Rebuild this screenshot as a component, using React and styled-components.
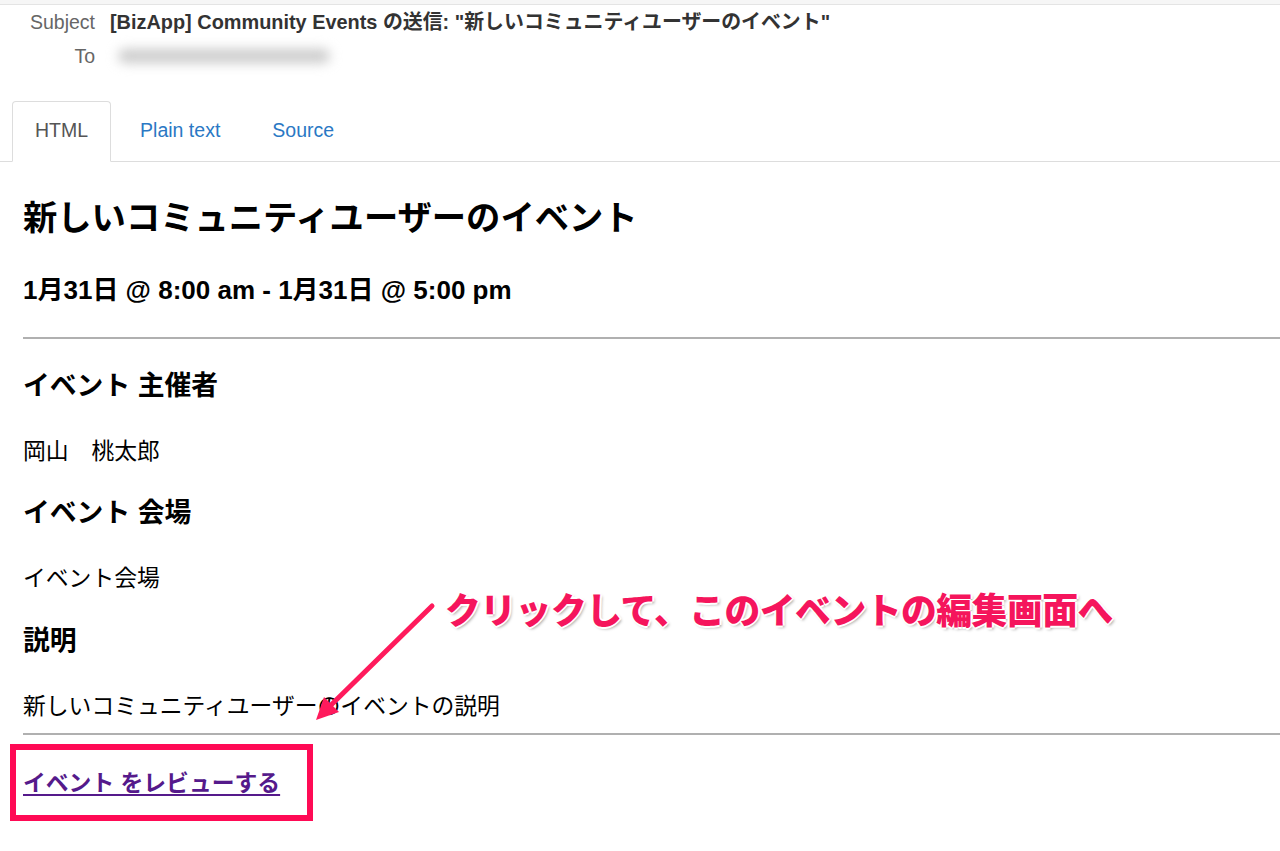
import React from "react";
import styled, { createGlobalStyle } from "styled-components";

const GlobalStyle = createGlobalStyle`
  html, body {
    margin: 0;
    padding: 0;
    background: #fff;
    font-family: "Liberation Sans", "Noto Sans CJK JP", sans-serif;
    color: #000;
  }
`;

const Page = styled.div`
  position: relative;
  width: 1280px;
  height: 851px;
  overflow: hidden;
`;

const TopStrip = styled.div`
  height: 4px;
  background: #f6f6f6;
  border-bottom: 1px solid #e4e4e4;
`;

const Meta = styled.div`
  display: grid;
  grid-template-columns: 95px 1fr;
  column-gap: 15px;
  row-gap: 12px;
  padding-top: 6px;
  font-size: 19.5px;
  line-height: 22px;
`;

const MetaLabel = styled.div`
  text-align: right;
  color: #666;
`;

const MetaValue = styled.div`
  color: #333;
  font-weight: ${(p) => (p.$bold ? 700 : 400)};
  font-size: ${(p) => (p.$bold ? "19.9px" : "inherit")};
`;

const Blurred = styled.div`
  margin: 4px 0 0 8px;
  width: 212px;
  height: 14px;
  background: #cbcbcb;
  border-radius: 7px;
  filter: blur(6px);
`;

const Tabs = styled.div`
  display: flex;
  margin-top: 34px;
  padding-left: 12px;
  border-bottom: 1px solid #dddddd;
`;

const Tab = styled.div`
  padding: 17px 22px 18px;
  margin-right: 6px;
  margin-bottom: ${(p) => (p.$active ? "-1px" : "0")};
  font-size: 19.5px;
  line-height: 23px;
  color: ${(p) => (p.$active ? "#555" : "#2a78c4")};
  background: ${(p) => (p.$active ? "#fff" : "transparent")};
  border: 1px solid ${(p) => (p.$active ? "#dddddd" : "transparent")};
  border-bottom-color: ${(p) => (p.$active ? "#fff" : "transparent")};
  border-radius: 4px 4px 0 0;
`;

const Body = styled.div`
  display: flex;
  flex-direction: column;
  padding-left: 23px;
`;

const Title = styled.h1`
  margin: 36px 0 0;
  font-size: 34.3px;
  line-height: 41px;
  font-weight: 700;
`;

const DateLine = styled.h2`
  margin: 37px 0 0;
  font-size: 26px;
  line-height: 29px;
  font-weight: 700;
`;

const Rule = styled.hr`
  margin: ${(p) => p.$top}px -20px 0 0;
  border: 0;
  border-top: 2px solid #b0b0b0;
  height: 0;
`;

const Heading = styled.h3`
  margin: ${(p) => p.$top}px 0 0;
  font-size: 26.8px;
  line-height: 31px;
  font-weight: 700;
`;

const Para = styled.p`
  margin: ${(p) => p.$top}px 0 0;
  font-size: 22.8px;
  line-height: 27px;
`;

const ReviewLink = styled.a`
  margin-top: 35px;
  align-self: flex-start;
  font-size: 22.8px;
  line-height: 27px;
  font-weight: 700;
  color: #551a8b;
  text-decoration: underline;
  text-underline-offset: 3px;
`;

const Callout = styled.div`
  position: absolute;
  left: 445px;
  top: 586px;
  font-family: "Noto Sans CJK JP", sans-serif;
  font-size: 35.8px;
  line-height: 44px;
  font-weight: 900;
  color: #f5155c;
  letter-spacing: -0.5px;
  text-shadow: -2px 0 #fff, 2px 0 #fff, 0 -2px #fff, 0 2px #fff,
    2px 2px 3px rgba(0, 0, 0, 0.35);
`;

const Arrow = styled.svg`
  position: absolute;
  left: 300px;
  top: 590px;
  width: 150px;
  height: 140px;
  overflow: visible;
`;

const Highlight = styled.div`
  position: absolute;
  left: 10px;
  top: 744px;
  width: 303px;
  height: 77px;
  box-sizing: border-box;
  border: 6px solid #ff0a55;
`;

export default function App() {
  return (
    <Page>
      <GlobalStyle />
      <TopStrip />
      <Meta>
        <MetaLabel>Subject</MetaLabel>
        <MetaValue $bold>
          [BizApp] Community Events の送信: "新しいコミュニティユーザーのイベント"
        </MetaValue>
        <MetaLabel>To</MetaLabel>
        <MetaValue>
          <Blurred />
        </MetaValue>
      </Meta>

      <Tabs>
        <Tab $active>HTML</Tab>
        <Tab>Plain text</Tab>
        <Tab>Source</Tab>
      </Tabs>

      <Body>
        <Title>新しいコミュニティユーザーのイベント</Title>
        <DateLine>1月31日 @ 8:00 am - 1月31日 @ 5:00 pm</DateLine>
        <Rule $top={32} />
        <Heading $top={32}>イベント 主催者</Heading>
        <Para $top={36}>岡山　桃太郎</Para>
        <Heading $top={33}>イベント 会場</Heading>
        <Para $top={36}>イベント会場</Para>
        <Heading $top={34}>説明</Heading>
        <Para $top={36}>新しいコミュニティユーザーのイベントの説明</Para>
        <Rule $top={13} />
        <ReviewLink href="#">イベント をレビューする</ReviewLink>
      </Body>

      <Callout>クリックして、このイベントの編集画面へ</Callout>
      <Arrow viewBox="300 590 150 140">
        <line
          x1="432"
          y1="606"
          x2="328"
          y2="708"
          stroke="#ff1a5c"
          strokeWidth="5"
          strokeLinecap="round"
        />
        <polygon points="316,720 339,712 324,697" fill="#ff1a5c" />
      </Arrow>
      <Highlight />
    </Page>
  );
}
